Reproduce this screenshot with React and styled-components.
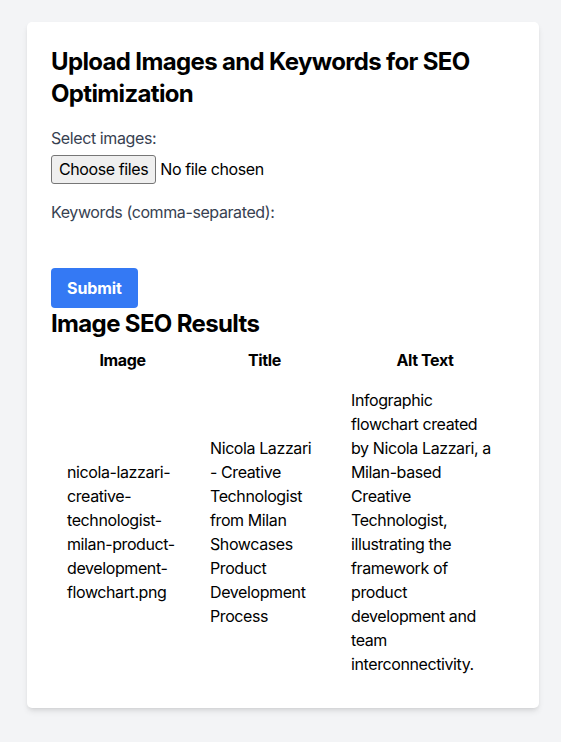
import React from 'react';
import styled, { createGlobalStyle } from 'styled-components';

const GlobalStyle = createGlobalStyle`
    * {
        box-sizing: border-box;
    }
    body {
        margin: 0;
        background: #f3f4f6;
        font-family: Inter, "Liberation Sans", sans-serif;
        font-size: 16px;
        line-height: 24px;
        letter-spacing: -0.4px;
        color: #000;
    }
`;

const results = [
    {
        image: 'nicola-lazzari-creative-technologist-milan-product-development-flowchart.png',
        title: 'Nicola Lazzari - Creative Technologist from Milan Showcases Product Development Process',
        alt: 'Infographic flowchart created by Nicola Lazzari, a Milan-based Creative Technologist, illustrating the framework of product development and team interconnectivity.',
    },
];

function App() {
    return (
        <Page>
            <GlobalStyle />
            <Card>
                <Heading spaced>Upload Images and Keywords for SEO Optimization</Heading>
                <form onSubmit={e => e.preventDefault()}>
                    <Field>
                        <Label htmlFor="images">Select images:</Label>
                        <FileRow>
                            <ChooseButton type="button">Choose files</ChooseButton>
                            <span>No file chosen</span>
                        </FileRow>
                    </Field>
                    <Field>
                        <Label htmlFor="keywords">Keywords (comma-separated):</Label>
                        <TextInput id="keywords" type="text" />
                    </Field>
                    <SubmitButton type="submit">Submit</SubmitButton>
                </form>

                <Heading>Image SEO Results</Heading>
                <Table>
                    <thead>
                        <tr>
                            <Th width={143}>Image</Th>
                            <Th width={141}>Title</Th>
                            <Th>Alt Text</Th>
                        </tr>
                    </thead>
                    <tbody>
                        {results.map(r => (
                            <tr key={r.image}>
                                <Td>{r.image}</Td>
                                <Td>{r.title}</Td>
                                <Td>{r.alt}</Td>
                            </tr>
                        ))}
                    </tbody>
                </Table>
            </Card>
        </Page>
    );
}

export default App;

const Page = styled.div`
    padding: 22px 22px 34px 27px;
`;

const Card = styled.div`
    width: 512px;
    background: #fff;
    border-radius: 5px;
    padding: 24px;
    box-shadow: 0 4px 6px -1px rgba(0, 0, 0, 0.1), 0 2px 4px -2px rgba(0, 0, 0, 0.1);
`;

const Heading = styled.h2`
    margin: 0 0 ${props => props.spaced ? '16px' : '0'};
    font-size: 24px;
    line-height: 32px;
    font-weight: 700;
    letter-spacing: -0.65px;
`;

const Field = styled.div`
    margin-bottom: 16px;
`;

const Label = styled.label`
    display: block;
    color: #374151;
    margin-bottom: 4px;
`;

const FileRow = styled.div`
    display: flex;
    align-items: center;
    gap: 4px;
    height: 30px;
`;

const ChooseButton = styled.button`
    height: 29px;
    padding: 0 7px;
    font: inherit;
    font-size: 16px;
    letter-spacing: inherit;
    color: #000;
    background: #efefef;
    border: 1px solid #767676;
    border-radius: 3px;
`;

const TextInput = styled.input`
    display: block;
    width: 100%;
    height: 24px;
    padding: 0;
    border: none;
    background: transparent;
    font: inherit;
    outline: none;
`;

const SubmitButton = styled.button`
    display: block;
    padding: 8px 16px;
    font: inherit;
    font-weight: 700;
    letter-spacing: -0.1px;
    color: #fff;
    background: #3479f4;
    border: none;
    border-radius: 4px;
`;

const Table = styled.table`
    width: 100%;
    border-collapse: collapse;
`;

const Th = styled.th`
    width: ${props => props.width ? `${props.width}px` : 'auto'};
    padding: 8px 16px;
    text-align: center;
    font-weight: 700;
`;

const Td = styled.td`
    padding: 8px 16px;
    vertical-align: middle;
`;
